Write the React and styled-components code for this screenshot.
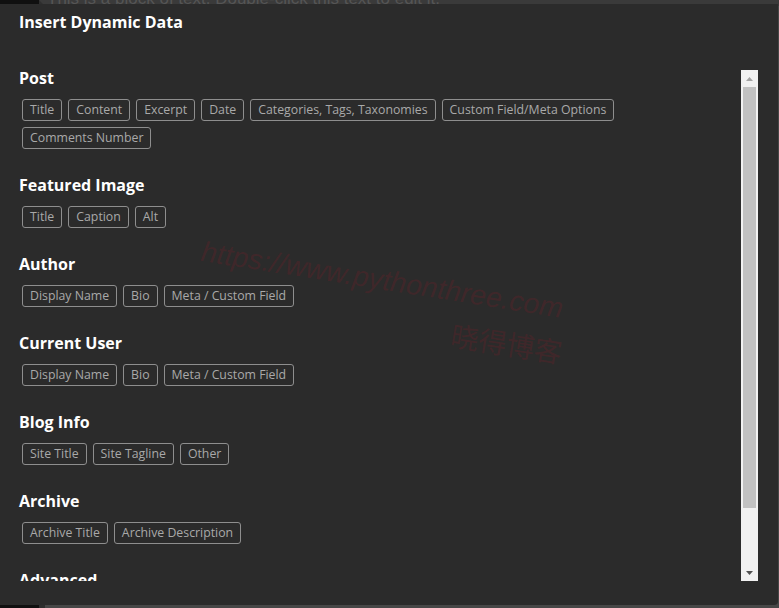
import React from "react";
import styled, { createGlobalStyle } from "styled-components";

const Global = createGlobalStyle`
  html, body { margin: 0; padding: 0; }
  body { background: #454545; font-family: "Open Sans", "Liberation Sans", sans-serif; overflow: hidden; }
`;

const Backdrop = styled.div`
  position: relative;
  width: 779px;
  height: 608px;
  display: grid;
  grid-template-columns: 39px 1fr;
  overflow: hidden;
`;

const LeftStrip = styled.div`
  background: #101010;
`;

const EditorArea = styled.div`
  background: #474747;
  border-top: 6px solid #3a3a3a;
  border-left: 6px solid #2e2e2e;
  padding-left: 2px;
  display: flex;
  flex-direction: column;
`;

const EditorText = styled.p`
  margin: -17px 0 0;
  font-family: "Liberation Sans", sans-serif;
  font-size: 17px;
  line-height: 20px;
  color: #555555;
`;

const Modal = styled.div`
  position: absolute;
  top: 4px;
  left: 0;
  width: 778px;
  height: 601px;
  background: #2b2b2b;
  border-radius: 0 0 4px 0;
  display: flex;
  flex-direction: column;
  box-sizing: border-box;
  padding-bottom: 24px;
`;

const Title = styled.h1`
  margin: 0;
  padding: 8px 19px 0;
  font-size: 16px;
  line-height: 20px;
  font-weight: 700;
  color: #ffffff;
`;

const Body = styled.div`
  margin-top: 38px;
  margin-right: 20px;
  flex: 1;
  display: flex;
  min-height: 0;
`;

const List = styled.div`
  flex: 1;
  overflow: hidden;
  padding-left: 19px;
`;

const Section = styled.section`
  margin-bottom: 28px;
`;

const Heading = styled.h2`
  margin: 0 0 13px;
  font-size: 16px;
  line-height: 16px;
  font-weight: 700;
  color: #ffffff;
`;

const Tags = styled.div`
  display: flex;
  flex-wrap: wrap;
  margin: -3px 0;
  max-width: 640px;
`;

const Tag = styled.span`
  margin: 3px;
  height: 22px;
  box-sizing: border-box;
  padding: 0 7px;
  border: 1px solid #8e8e8e;
  border-radius: 3px;
  font-size: 12.3px;
  line-height: 20px;
  color: #a9a9a9;
  white-space: nowrap;
`;

const Scrollbar = styled.div`
  width: 17px;
  display: flex;
  flex-direction: column;
  background: #f1f1f1;
`;

const ScrollButton = styled.div`
  height: 17px;
  display: flex;
  align-items: center;
  justify-content: center;
`;

const Track = styled.div`
  flex: 1;
  padding: 0 2px;
  display: flex;
  flex-direction: column;
`;

const Thumb = styled.div`
  height: 421px;
  background: #c1c1c1;
`;

const Watermark = styled.div`
  position: absolute;
  left: 204px;
  top: 231px;
  transform: rotate(9deg);
  transform-origin: left top;
  color: rgba(150, 25, 40, 0.2);
  font-family: "Liberation Sans", sans-serif;
  display: flex;
  flex-direction: column;
  align-items: flex-end;
  pointer-events: none;
`;

const WatermarkUrl = styled.div`
  font-size: 28.5px;
  line-height: 32px;
  font-style: italic;
`;

const WatermarkName = styled.div`
  margin-top: 10px;
  margin-right: -6px;
  font-size: 28px;
  line-height: 34px;
  font-family: "Noto Sans CJK SC", sans-serif;
`;

const sections = [
  { title: "Post", tags: ["Title", "Content", "Excerpt", "Date", "Categories, Tags, Taxonomies", "Custom Field/Meta Options", "Comments Number"] },
  { title: "Featured Image", tags: ["Title", "Caption", "Alt"] },
  { title: "Author", tags: ["Display Name", "Bio", "Meta / Custom Field"] },
  { title: "Current User", tags: ["Display Name", "Bio", "Meta / Custom Field"] },
  { title: "Blog Info", tags: ["Site Title", "Site Tagline", "Other"] },
  { title: "Archive", tags: ["Archive Title", "Archive Description"] },
  { title: "Advanced", tags: ["Shortcode", "Request Parameter"] },
];

export default function App() {
  return (
    <>
      <Global />
      <Backdrop>
        <LeftStrip />
        <EditorArea>
          <EditorText>This is a block of text. Double-click this text to edit it.</EditorText>
        </EditorArea>
        <Modal>
          <Title>Insert Dynamic Data</Title>
          <Body>
            <List>
              {sections.map((s) => (
                <Section key={s.title}>
                  <Heading>{s.title}</Heading>
                  <Tags>
                    {s.tags.map((t) => (
                      <Tag key={t}>{t}</Tag>
                    ))}
                  </Tags>
                </Section>
              ))}
            </List>
            <Scrollbar>
              <ScrollButton>
                <svg width="7" height="4" viewBox="0 0 7 4">
                  <path d="M3.5 0 L7 4 L0 4 Z" fill="#a3a3a3" />
                </svg>
              </ScrollButton>
              <Track>
                <Thumb />
              </Track>
              <ScrollButton>
                <svg width="7" height="4" viewBox="0 0 7 4">
                  <path d="M0 0 L7 0 L3.5 4 Z" fill="#505050" />
                </svg>
              </ScrollButton>
            </Scrollbar>
          </Body>
          <Watermark>
            <WatermarkUrl>https://www.pythonthree.com</WatermarkUrl>
            <WatermarkName>晓得博客</WatermarkName>
          </Watermark>
        </Modal>
      </Backdrop>
    </>
  );
}
